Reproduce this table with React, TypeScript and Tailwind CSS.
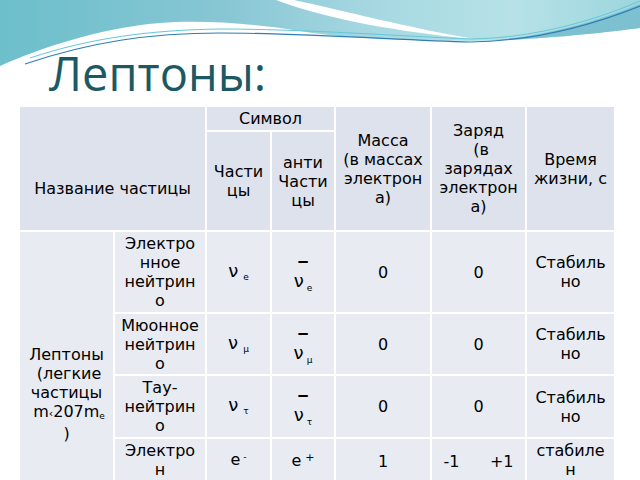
import React from 'react';

const cell = 'border-2 border-white text-center align-middle p-0';
const head = 'bg-[#dde2ec]';
const body = 'bg-[#e8ebf2]';

function Lines({ items }: { items: React.ReactNode[] }) {
  return (
    <>
      {items.map((t, i) => (
        <div key={i} className="whitespace-pre">
          {t}
        </div>
      ))}
    </>
  );
}

function Nu({ sub, anti }: { sub: string; anti?: boolean }) {
  if (anti) {
    return (
      <div className="flex flex-col items-center">
        <span className="leading-[20px] font-bold">‒</span>
        <span className="text-[18px]">
          ν<span className="text-[9px] relative top-[4px] ml-[3px]">{sub}</span>
        </span>
      </div>
    );
  }
  return (
    <span className="text-[18px]">
      ν<span className="text-[9px] relative top-[3px] ml-[5px]">{sub}</span>
    </span>
  );
}

function Wave() {
  return (
    <svg
      className="absolute left-0 top-0 pointer-events-none"
      width="640"
      height="90"
      viewBox="0 0 640 90"
    >
      <defs>
        <linearGradient id="tg" x1="0" y1="0" x2="1" y2="0">
          <stop offset="0" stopColor="#6cbfcb" />
          <stop offset="0.35" stopColor="#88c6d4" />
          <stop offset="0.6" stopColor="#a8d9e2" />
          <stop offset="0.8" stopColor="#b6e2e7" />
          <stop offset="1" stopColor="#9dd5de" />
        </linearGradient>
      </defs>
      <path
        d="M0,0 H640 V28 C600,33 540,40 470,41 C400,40 340,38 300,31 C250,23 200,20 160,23 C100,28 40,48 0,66 Z"
        fill="url(#tg)"
      />
      <path d="M276,0 L294,0 C340,10 410,28 474,39 C400,32 330,20 276,0 Z" fill="#ffffff" />
      <path d="M470,41 C540,40 600,20 640,4 L640,28 C600,33 540,40 470,41 Z" fill="#7dc0d0" />
      <path
        d="M30,60 C90,40 150,32 220,31 C300,31 400,38 470,41 C540,40 600,20 640,3"
        fill="none"
        stroke="#62c9d7"
        strokeWidth="1"
        transform="translate(0,-2)"
      />
      <path
        d="M25,64 C90,42 150,33 220,33 C300,33 400,40 470,42 C540,41 600,22 640,6"
        fill="none"
        stroke="#2e7db6"
        strokeWidth="1.2"
      />
    </svg>
  );
}

export default function App() {
  return (
    <div className="relative w-[640px] h-[480px] overflow-hidden bg-white font-['DejaVu_Sans',sans-serif] text-black">
      <Wave />

      {/* заголовок */}
      <div className="relative h-[105px] pt-[45px] pl-[49px]">
        <h1 className="font-['Open_Sans',sans-serif] text-[47px] leading-[56px] text-[#1d5963]">
          Лептоны:
        </h1>
      </div>

      {/* таблица */}
      <table className="relative ml-[18px] w-[596px] table-fixed border-collapse text-[16px] leading-[19px]">
        <colgroup>
          <col className="w-[95px]" />
          <col className="w-[92px]" />
          <col className="w-[65px]" />
          <col className="w-[64px]" />
          <col className="w-[96px]" />
          <col className="w-[95px]" />
          <col className="w-[89px]" />
        </colgroup>
        <tbody>
          <tr className="h-[25px]">
            <td colSpan={2} rowSpan={2} className={`${cell} ${head} pt-[40px]`}>
              Название частицы
            </td>
            <td colSpan={2} className={`${cell} ${head}`}>
              Символ
            </td>
            <td rowSpan={2} className={`${cell} ${head}`}>
              <Lines items={['Масса', '(в массах', 'электрон', 'а)']} />
            </td>
            <td rowSpan={2} className={`${cell} ${head}`}>
              <Lines items={['Заряд', ' (в', 'зарядах', 'электрон', 'а)']} />
            </td>
            <td rowSpan={2} className={`${cell} ${head}`}>
              <Lines items={['Время', 'жизни, с']} />
            </td>
          </tr>
          <tr className="h-[100px]">
            <td className={`${cell} ${head}`}>
              <Lines items={['Части', 'цы']} />
            </td>
            <td className={`${cell} ${head}`}>
              <Lines items={['анти', 'Части', 'цы']} />
            </td>
          </tr>

          <tr className="h-[82px]">
            <td rowSpan={4} className={`${cell} ${body} !align-top pt-[113px]`}>
              <Lines
                items={[
                  'Лептоны',
                  ' (легкие',
                  'частицы',
                  <span>
                    {' '}m<span className="text-[11px]">‹</span>207m
                    <span className="text-[9px] relative top-[2px]">e</span>
                  </span>,
                  ')',
                ]}
              />
            </td>
            <td className={`${cell} ${body}`}>
              <Lines items={['Электро', 'нное', 'нейтрин', 'о']} />
            </td>
            <td className={`${cell} ${body}`}>
              <Nu sub="e" />
            </td>
            <td className={`${cell} ${body}`}>
              <Nu sub="e" anti />
            </td>
            <td className={`${cell} ${body}`}>0</td>
            <td className={`${cell} ${body}`}>0</td>
            <td className={`${cell} ${body}`}>
              <Lines items={['Стабиль', 'но']} />
            </td>
          </tr>

          <tr className="h-[62px]">
            <td className={`${cell} ${body}`}>
              <Lines items={['Мюонное', 'нейтрин', 'о']} />
            </td>
            <td className={`${cell} ${body}`}>
              <Nu sub="μ" />
            </td>
            <td className={`${cell} ${body}`}>
              <Nu sub="μ" anti />
            </td>
            <td className={`${cell} ${body}`}>0</td>
            <td className={`${cell} ${body}`}>0</td>
            <td className={`${cell} ${body}`}>
              <Lines items={['Стабиль', 'но']} />
            </td>
          </tr>

          <tr className="h-[63px]">
            <td className={`${cell} ${body}`}>
              <Lines items={['Тау-', 'нейтрин', 'о']} />
            </td>
            <td className={`${cell} ${body}`}>
              <Nu sub="τ" />
            </td>
            <td className={`${cell} ${body}`}>
              <Nu sub="τ" anti />
            </td>
            <td className={`${cell} ${body}`}>0</td>
            <td className={`${cell} ${body}`}>0</td>
            <td className={`${cell} ${body}`}>
              <Lines items={['Стабиль', 'но']} />
            </td>
          </tr>

          <tr className="h-[46px]">
            <td className={`${cell} ${body} !align-top pt-[2px]`}>
              <Lines items={['Электро', 'н']} />
            </td>
            <td className={`${cell} ${body}`}>
              e<span className="text-[9px] relative -top-[5px] ml-[3px]">-</span>
            </td>
            <td className={`${cell} ${body}`}>
              e<span className="text-[11px] relative -top-[5px] ml-[4px]">+</span>
            </td>
            <td className={`${cell} ${body}`}>1</td>
            <td className={`${cell} ${body} whitespace-pre`}>{'-1      +1'}</td>
            <td className={`${cell} ${body} !align-top pt-[2px]`}>
              <Lines items={['стабиле', 'н']} />
            </td>
          </tr>
        </tbody>
      </table>
    </div>
  );
}
